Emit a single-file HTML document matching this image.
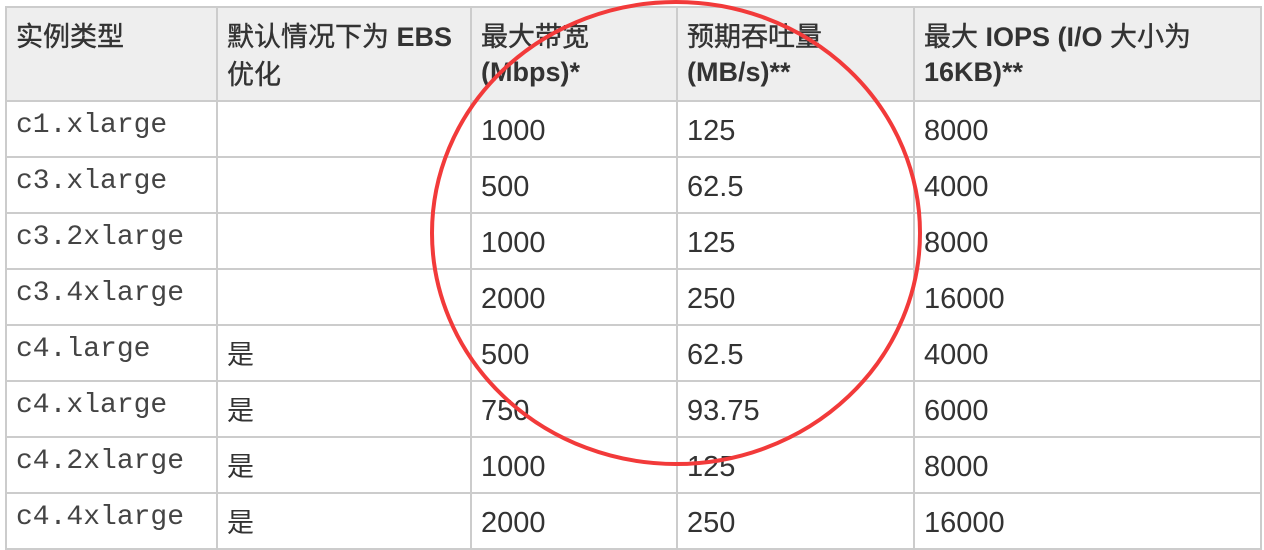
<!DOCTYPE html>
<html><head><meta charset="utf-8"><style>
html,body{margin:0;padding:0;background:#fff;width:1264px;height:520px;overflow:hidden}
table{position:absolute;left:5px;top:6px;border-collapse:collapse;table-layout:fixed;color:#333;font-family:"Liberation Sans","Noto Sans CJK SC",sans-serif;font-size:29px}
td,th{border:2px solid #ccc;padding:0 0 0 9px;vertical-align:middle;text-align:left;overflow:hidden;white-space:nowrap}
th{background:#eee;font-weight:bold;height:94px;line-height:35px;vertical-align:top;padding-top:9px;box-sizing:border-box;font-size:27px}
th span{font-weight:normal;font-family:"Noto Sans CJK SC",sans-serif;-webkit-text-stroke:0.4px #333}
td{height:54px;line-height:30px;padding-top:4px;padding-bottom:0;box-sizing:border-box}
tr.r{height:56px}
td.m{font-family:"Liberation Mono",monospace;font-size:28px;vertical-align:top;padding-top:9px;color:#444}
td.c{font-size:27px}
</style></head><body>
<table>
<colgroup><col style="width:211px"><col style="width:254px"><col style="width:206px"><col style="width:237px"><col style="width:347px"></colgroup>
<tr><th><span>实例类型</span></th><th><span>默认情况下为</span> EBS<br><span>优化</span></th><th><span>最大带宽</span><br>(Mbps)*</th><th><span>预期吞吐量</span><br>(MB/s)**</th><th><span>最大</span> IOPS (I/O <span>大小为</span><br>16KB)**</th></tr>
<tr class="r"><td class="m">c1.xlarge</td><td></td><td>1000</td><td>125</td><td>8000</td></tr>
<tr class="r"><td class="m">c3.xlarge</td><td></td><td>500</td><td>62.5</td><td>4000</td></tr>
<tr class="r"><td class="m">c3.2xlarge</td><td></td><td>1000</td><td>125</td><td>8000</td></tr>
<tr class="r"><td class="m">c3.4xlarge</td><td></td><td>2000</td><td>250</td><td>16000</td></tr>
<tr class="r"><td class="m">c4.large</td><td class="c">是</td><td>500</td><td>62.5</td><td>4000</td></tr>
<tr class="r"><td class="m">c4.xlarge</td><td class="c">是</td><td>750</td><td>93.75</td><td>6000</td></tr>
<tr class="r"><td class="m">c4.2xlarge</td><td class="c">是</td><td>1000</td><td>125</td><td>8000</td></tr>
<tr class="r"><td class="m">c4.4xlarge</td><td class="c">是</td><td>2000</td><td>250</td><td>16000</td></tr>
</table>
<svg width="1264" height="520" style="position:absolute;left:0;top:0">
<ellipse cx="676" cy="233" rx="244" ry="231" fill="none" stroke="#f23a3a" stroke-width="4"/>
</svg>
</body></html>
